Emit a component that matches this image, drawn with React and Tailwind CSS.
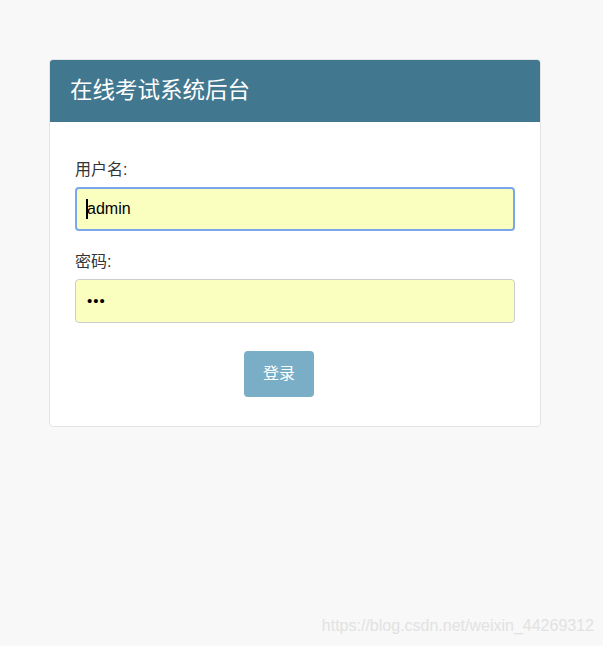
import React from 'react';

const font = { fontFamily: '"Liberation Sans", "Noto Sans CJK SC", sans-serif' };

const App = () => {
  return (
    <div className="relative h-[646px] w-full overflow-hidden bg-[#f8f8f8]" style={font}>
      <div className="pt-[59px] pl-[49px]">
        {/* Login card */}
        <div className="w-[492px] overflow-hidden rounded-[4px] border border-[#e4e4e4] bg-white">
          <div className="flex h-[62px] items-center bg-[#41778f] pl-[20px] text-[22.5px] text-white">
            在线考试系统后台
          </div>

          <div className="px-[25px] pt-[37px] pb-[29px]">
            <label className="mb-[6px] block text-[16px] leading-[22px] text-[#333]">用户名:</label>
            <div className="flex h-[44px] w-[440px] items-center rounded-[4px] border-2 border-[#7aa7ec] bg-[#faffc0] pl-[9px] text-[16px] text-black">
              <span className="mr-[-1px] h-[20px] w-[2px] bg-black" />
              admin
            </div>

            <label className="mt-[20px] mb-[6px] block text-[16px] leading-[22px] text-[#333]">密码:</label>
            <div className="flex h-[44px] w-[440px] items-center rounded-[4px] border border-[#cccccc] bg-[#faffc0] pl-[11px] text-[15px] tracking-[1px] text-black">
              •••
            </div>

            <div className="mt-[28px] pl-[169px]">
              <button className="h-[46px] w-[70px] rounded-[4px] bg-[#79aec6] text-[16px] text-white">
                登录
              </button>
            </div>
          </div>
        </div>
      </div>

      <div className="absolute right-[9px] bottom-[8px] text-[16px] text-[#e2e2e2]">
        https://blog.csdn.net/weixin_44269312
      </div>
    </div>
  );
};

export default App;
